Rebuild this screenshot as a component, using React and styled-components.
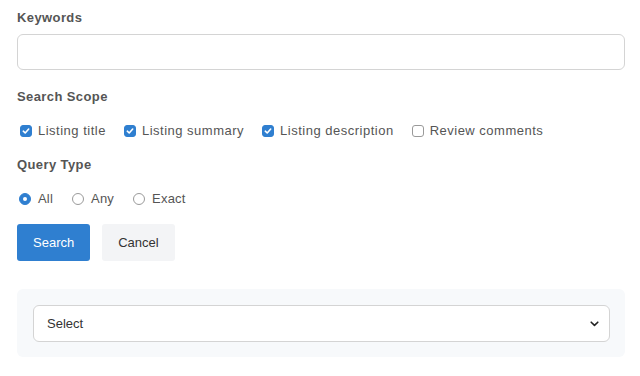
import styled, { createGlobalStyle } from "styled-components";

const GlobalStyle = createGlobalStyle`
  html, body {
    margin: 0;
    padding: 0;
    background: #ffffff;
  }
  body {
    font-family: "Liberation Sans", Arial, Helvetica, sans-serif;
    color: #555555;
  }
`;

const appColors = {
  blue: "#2f7fd0",
  label: "#555555",
  text: "#555555",
  border: "#d4d4d4",
  panel: "#f7f9fb",
};

const Page = styled.div`
  width: 608px;
  padding: 10px 15px 0 17px;
  display: flex;
  flex-direction: column;
`;

const Label = styled.div`
  font-size: 13px;
  font-weight: bold;
  letter-spacing: 0.4px;
  line-height: 16px;
  color: ${appColors.label};
  margin-top: ${(p) => p.$top || 0}px;
`;

const TextInput = styled.input`
  box-sizing: border-box;
  width: 100%;
  height: 36px;
  margin-top: 8px;
  border: 1px solid ${appColors.border};
  border-radius: 6px;
  background: #fff;
  outline: none;
  padding: 0 12px;
  font-family: inherit;
  font-size: 13px;
`;

const OptionRow = styled.div`
  display: flex;
  align-items: center;
  height: 20px;
  margin-top: 16px;
`;

const Option = styled.label`
  display: flex;
  align-items: center;
  gap: ${(p) => (p.$radio ? 7 : 6)}px;
  margin-right: ${(p) => (p.$radio ? 17 : 15)}px;
  font-size: 13px;
  letter-spacing: ${(p) => (p.$radio ? 0.2 : 0.5)}px;
  color: ${appColors.text};
  line-height: 16px;
`;

const Box = styled.span`
  box-sizing: border-box;
  width: 12px;
  height: 12px;
  margin-left: 3px;
  border-radius: 3px;
  display: flex;
  align-items: center;
  justify-content: center;
  background: ${(p) => (p.$on ? appColors.blue : "#fff")};
  border: 1px solid ${(p) => (p.$on ? appColors.blue : "#9a9a9a")};
`;

const Dot = styled.span`
  box-sizing: border-box;
  width: 12px;
  height: 12px;
  margin-left: 2px;
  border-radius: 50%;
  display: flex;
  align-items: center;
  justify-content: center;
  background: ${(p) => (p.$on ? appColors.blue : "#fff")};
  border: 1px solid ${(p) => (p.$on ? appColors.blue : "#9a9a9a")};

  &::after {
    content: "";
    display: ${(p) => (p.$on ? "block" : "none")};
    width: 4px;
    height: 4px;
    border-radius: 50%;
    background: #fff;
  }
`;

const Buttons = styled.div`
  display: flex;
  gap: 12px;
  margin-top: 15px;
`;

const Button = styled.button`
  height: 37px;
  padding: 0 16px;
  border: none;
  border-radius: 3px;
  font-family: inherit;
  font-size: 13px;
  color: ${(p) => (p.$primary ? "#ffffff" : "#333333")};
  background: ${(p) => (p.$primary ? appColors.blue : "#f3f4f6")};
`;

const Panel = styled.div`
  margin-top: 28px;
  background: ${appColors.panel};
  border-radius: 6px;
  padding: 16px 15px 15px 16px;
`;

const SelectBox = styled.div`
  box-sizing: border-box;
  height: 37px;
  border: 1px solid ${appColors.border};
  border-radius: 6px;
  background: #fff;
  display: flex;
  align-items: center;
  justify-content: space-between;
  padding: 0 10px 0 13px;
  font-size: 13px;
  color: #333333;
`;

const Check = () => (
  <svg width="8" height="8" viewBox="0 0 8 8">
    <path d="M1.3 4.2 L3.2 6 L6.7 2" fill="none" stroke="#fff" strokeWidth="1.6" strokeLinecap="round" strokeLinejoin="round" />
  </svg>
);

const Chevron = () => (
  <svg width="9" height="6" viewBox="0 0 9 6">
    <path d="M1.2 1.2 L4.5 4.4 L7.8 1.2" fill="none" stroke="#222" strokeWidth="1.6" strokeLinecap="round" strokeLinejoin="round" />
  </svg>
);

const scopes = [
  { name: "Listing title", on: true },
  { name: "Listing summary", on: true },
  { name: "Listing description", on: true },
  { name: "Review comments", on: false },
];

const types = [
  { name: "All", on: true },
  { name: "Any", on: false },
  { name: "Exact", on: false },
];

const App = () => {
  return (
    <>
      <GlobalStyle />
      <Page>
        <Label>Keywords</Label>
        <TextInput type="text" />

        <Label $top={19}>Search Scope</Label>
        <OptionRow>
          {scopes.map((s) => (
            <Option key={s.name}>
              <Box $on={s.on}>{s.on && <Check />}</Box>
              {s.name}
            </Option>
          ))}
        </OptionRow>

        <Label $top={16}>Query Type</Label>
        <OptionRow>
          {types.map((t) => (
            <Option key={t.name} $radio>
              <Dot $on={t.on} />
              {t.name}
            </Option>
          ))}
        </OptionRow>

        <Buttons>
          <Button $primary>Search</Button>
          <Button>Cancel</Button>
        </Buttons>

        <Panel>
          <SelectBox>
            <span>Select</span>
            <Chevron />
          </SelectBox>
        </Panel>
      </Page>
    </>
  );
};

export default App;
